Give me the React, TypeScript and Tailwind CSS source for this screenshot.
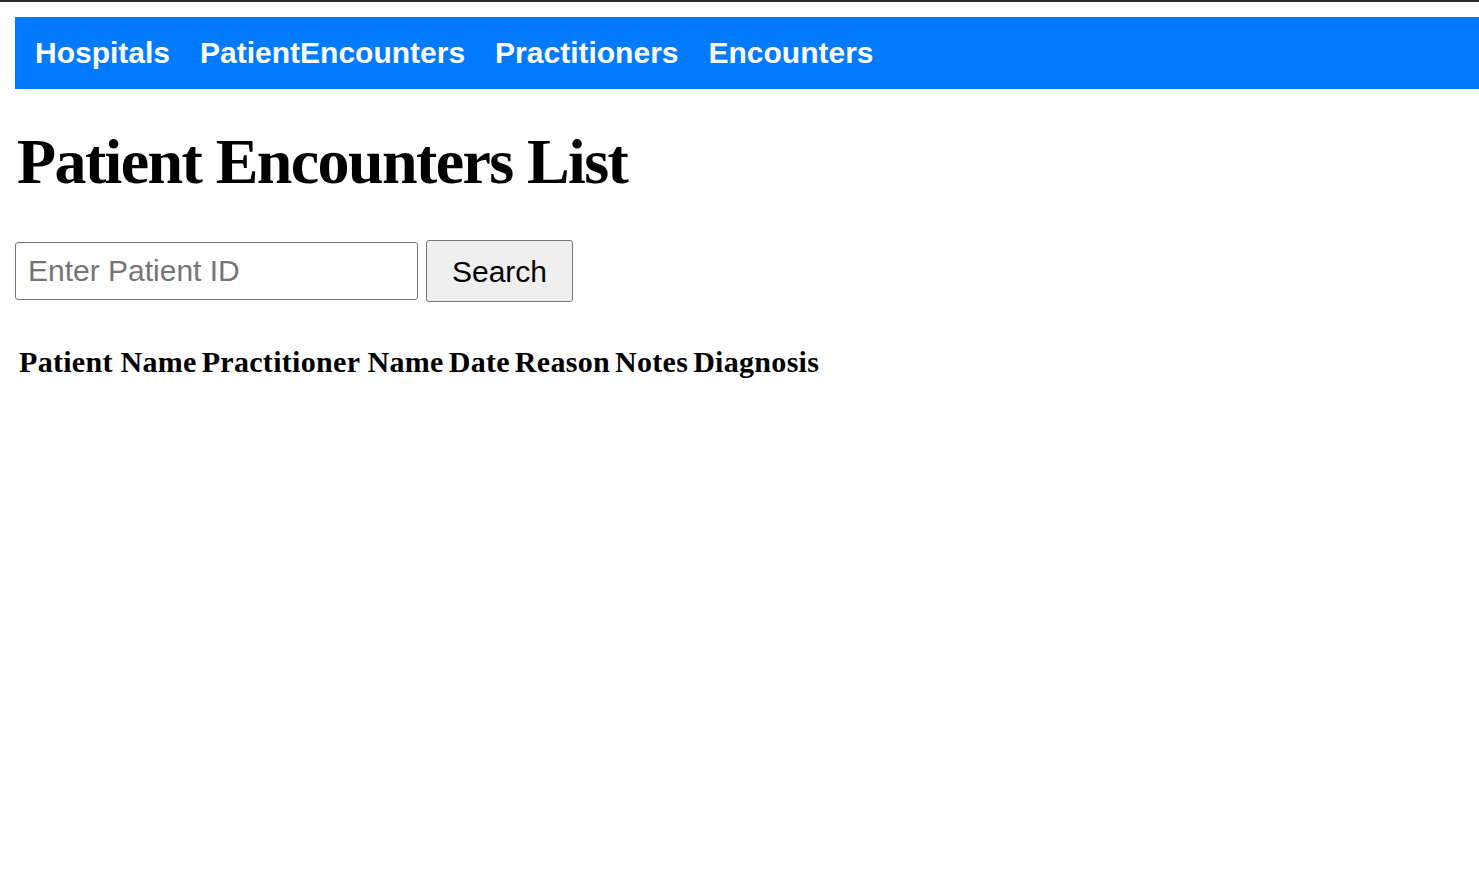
import React from 'react';

const links = ['Hospitals', 'PatientEncounters', 'Practitioners', 'Encounters'];
const columns = ['Patient Name', 'Practitioner Name', 'Date', 'Reason', 'Notes', 'Diagnosis'];

export default function App() {
  return (
    <div className="min-h-[880px] bg-white">
      {/* top edge */}
      <div className="h-[2px] w-full bg-[#2b2b2b]" />

      <div className="pl-[15px] pt-[15px]">
        {/* Nav bar */}
        <nav className="flex h-[72px] items-center gap-[30px] bg-[#007bff] pb-[1px] pl-[20px]">
          {links.map((l) => (
            <a
              key={l}
              href="#"
              className="text-[30px] font-bold text-white"
              style={{ fontFamily: '"Liberation Sans", Arial, sans-serif' }}
            >
              {l}
            </a>
          ))}
        </nav>

        <h1
          className="mt-[41px] pl-[2px] text-[64px] font-bold leading-[1] tracking-[-1.6px] text-black"
          style={{ fontFamily: '"Liberation Serif", "Times New Roman", serif' }}
        >
          Patient Encounters List
        </h1>

        {/* Search */}
        <div className="mt-[46px] flex items-center gap-[8px]" style={{ fontFamily: '"Liberation Sans", Arial, sans-serif' }}>
          <input
            type="text"
            placeholder="Enter Patient ID"
            className="h-[58px] w-[403px] rounded-[3px] border border-[#767676] bg-white px-[12px] text-[30px] text-black placeholder:text-[#757575]"
          />
          <button className="h-[62px] w-[147px] rounded-[3px] border border-[#767676] bg-[#efefef] text-[30px] text-black">
            Search
          </button>
        </div>

        {/* Table */}
        <table
          className="mt-[34px] border-separate border-spacing-[3px]"
          style={{ fontFamily: '"Liberation Serif", "Times New Roman", serif' }}
        >
          <thead>
            <tr>
              {columns.map((c) => (
                <th key={c} className="px-[1px] text-[30px] font-bold tracking-[0.3px] text-black">
                  {c}
                </th>
              ))}
            </tr>
          </thead>
          <tbody />
        </table>
      </div>
    </div>
  );
}
